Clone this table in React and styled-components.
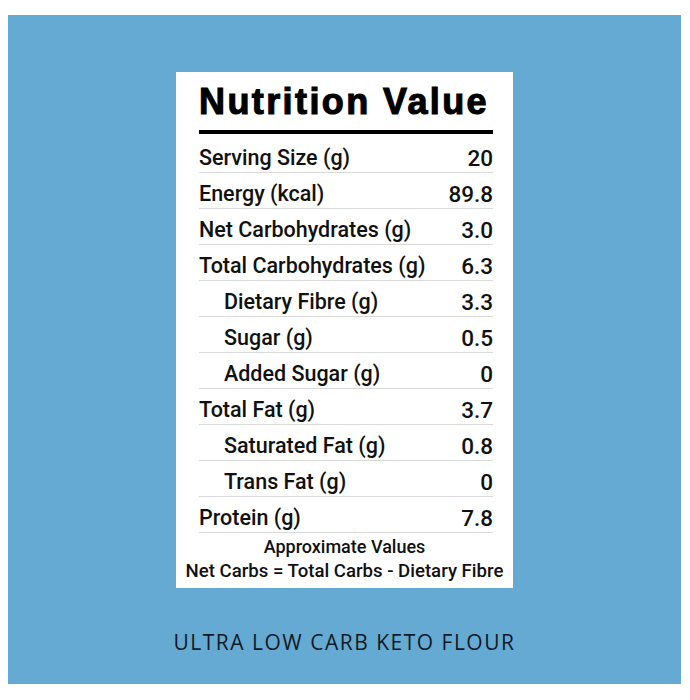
import React from "react";
import styled, { createGlobalStyle } from "styled-components";

const Global = createGlobalStyle`
  html, body { margin: 0; padding: 0; background: #ffffff; }
  body { font-family: "Roboto", "Liberation Sans", sans-serif; }
`;

const Page = styled.div`
  width: 690px;
  height: 700px;
  box-sizing: border-box;
  padding: 15px 9px 16px 8px;
  background: #ffffff;
`;

const Panel = styled.div`
  width: 673px;
  height: 669px;
  background: #65aad3;
  display: flex;
  flex-direction: column;
  align-items: center;
  padding-top: 57px;
  box-sizing: border-box;
`;

const Card = styled.div`
  width: 337px;
  height: 516px;
  box-sizing: border-box;
  background: #ffffff;
  padding: 10px 20px 0 23px;
  display: flex;
  flex-direction: column;
`;

const Title = styled.h1`
  margin: 0;
  font-family: "Liberation Sans", Arial, sans-serif;
  font-weight: 700;
  font-size: 36px;
  line-height: 40px;
  letter-spacing: 2.4px;
  color: #000;
  -webkit-text-stroke: 1.1px #000;
  white-space: nowrap;
`;

const Rule = styled.div`
  height: 4px;
  background: #000;
  margin: 8px 0 3px;
`;

const Row = styled.div`
  display: flex;
  justify-content: space-between;
  height: 36px;
  box-sizing: border-box;
  padding-top: 10px;
  padding-left: ${(p) => (p.$indent ? "25px" : "0")};
  border-bottom: 1px solid #d9d9d9;
  font-family: "Roboto", "Liberation Sans", sans-serif;
  font-weight: 500;
  font-size: 21.5px;
  line-height: 22px;
  color: #111;
  white-space: nowrap;
`;

const Value = styled.span`
  text-align: right;
  font-size: 22.5px;
`;

const Note = styled.div`
  text-align: center;
  font-family: "Roboto", "Liberation Sans", sans-serif;
  font-weight: 500;
  font-size: ${(p) => p.$size}px;
  line-height: 24px;
  color: #111;
  white-space: nowrap;
  margin: ${(p) => p.$mt || 0}px -20px 0 -23px;
`;

const Caption = styled.div`
  margin-top: 40px;
  font-family: "Open Sans", "Liberation Sans", sans-serif;
  font-size: 21px;
  line-height: 28px;
  letter-spacing: 1.5px;
  color: #0f1a26;
  white-space: nowrap;
`;

const rows = [
  ["Serving Size (g)", "20", false],
  ["Energy (kcal)", "89.8", false],
  ["Net Carbohydrates (g)", "3.0", false],
  ["Total Carbohydrates (g)", "6.3", false],
  ["Dietary Fibre (g)", "3.3", true],
  ["Sugar (g)", "0.5", true],
  ["Added Sugar (g)", "0", true],
  ["Total Fat (g)", "3.7", false],
  ["Saturated Fat (g)", "0.8", true],
  ["Trans Fat (g)", "0", true],
  ["Protein (g)", "7.8", false],
];

export default function App() {
  return (
    <>
      <Global />
      <Page>
        <Panel>
          <Card>
            <Title>Nutrition Value</Title>
            <Rule />
            {rows.map(([label, value, indent]) => (
              <Row key={label} $indent={indent}>
                <span>{label}</span>
                <Value>{value}</Value>
              </Row>
            ))}
            <Note $size={18} $mt={2}>Approximate Values</Note>
            <Note $size={18.6}>Net Carbs = Total Carbs - Dietary Fibre</Note>
          </Card>
          <Caption>ULTRA LOW CARB KETO FLOUR</Caption>
        </Panel>
      </Page>
    </>
  );
}
